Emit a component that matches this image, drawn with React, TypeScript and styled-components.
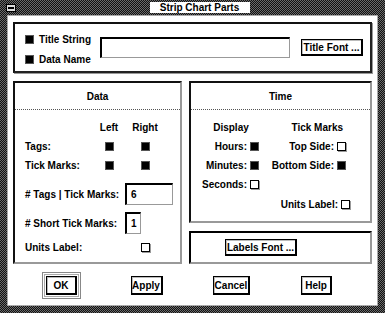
import React from "react";
import styled, { createGlobalStyle, css } from "styled-components";

const GlobalStyle = createGlobalStyle`
  html, body { margin: 0; padding: 0; background: #fff; }
  body { font-family: "Liberation Sans", Arial, sans-serif; }
`;

const dither = css`
  background-color: #333;
  background-image: repeating-conic-gradient(#111 0% 25%, #6a6a6a 0% 50%);
  background-size: 2px 2px;
`;

const Window = styled.div`
  ${dither};
  width: 385px;
  height: 313px;
  box-sizing: border-box;
  padding: 0 7px 7px 7px;
  display: flex;
  flex-direction: column;
`;

const TitleBar = styled.div`
  height: 15px;
  display: flex;
  align-items: center;
  margin: 0 -1px;
`;

const MenuButton = styled.div`
  width: 10px;
  height: 8px;
  box-sizing: border-box;
  background: #ddd;
  border: 1px solid #000;
  display: flex;
  align-items: center;
  justify-content: center;
  &::after {
    content: "";
    width: 6px;
    height: 2px;
    background: #000;
  }
`;

const TitleArea = styled.div`
  flex: 1;
  display: flex;
  justify-content: center;
`;

const TitleLabel = styled.div`
  background: #fff;
  width: 100px;
  height: 11px;
  line-height: 11px;
  text-align: center;
  font-size: 10px;
  font-weight: bold;
  color: #000;
  margin-left: 4px;
`;

const Body = styled.div`
  flex: 1;
  background: #fff;
  box-shadow: inset 0 0 0 1px #aaa;
  padding: 7px 6px 0 6px;
  display: flex;
  flex-direction: column;
  font-size: 10px;
  font-weight: bold;
  color: #000;
`;

const Panel = styled.div`
  box-sizing: border-box;
  border-top: 2px solid #111;
  border-left: 2px solid #111;
  border-right: 2px solid #999;
  border-bottom: 2px solid #999;
`;

const TopPanel = styled(Panel)`
  height: 51px;
  display: flex;
  align-items: center;
  padding-left: 10px;
  border-right-color: #222;
  border-bottom-color: #222;
  box-shadow: 1px 1px 0 #999;
`;

const CheckColumn = styled.div`
  display: flex;
  flex-direction: column;
  gap: 9px;
  width: 75px;
  padding-top: 3px;
`;

const CheckRow = styled.div`
  display: flex;
  align-items: center;
  gap: 5px;
  height: 11px;
`;

const Box = styled.div<{ $on?: boolean }>`
  width: 9px;
  height: 9px;
  box-sizing: border-box;
  flex: none;
  border: 1px solid ${(p) => (p.$on ? "#555" : "#000")};
  background: ${(p) => (p.$on ? "#000" : "#fff")};
  box-shadow: ${(p) => (p.$on ? "none" : "1px 1px 0 #999")};
`;

const TextField = styled.div<{ $w: number }>`
  box-sizing: border-box;
  width: ${(p) => p.$w}px;
  height: 22px;
  border-top: 2px solid #000;
  border-left: 2px solid #000;
  border-right: 1px solid #999;
  border-bottom: 1px solid #999;
  padding-left: 4px;
  display: flex;
  align-items: center;
  font-size: 10px;
  font-weight: bold;
`;

const WideField = styled(TextField)`
  height: 21px;
`;

const PushButton = styled.div<{ $w: number }>`
  box-sizing: border-box;
  width: ${(p) => p.$w}px;
  height: 17px;
  border: 1px solid #000;
  border-right-width: 2px;
  border-bottom-width: 2px;
  box-shadow: inset 1px 1px 0 #bbb;
  display: flex;
  align-items: center;
  justify-content: center;
  font-size: 10px;
  font-weight: bold;
  white-space: nowrap;
  background: #fff;
`;

const TitleFontButton = styled(PushButton)`
  margin-left: 11px;
`;

const Columns = styled.div`
  margin-top: 8px;
  display: grid;
  grid-template-columns: 169px 183px;
  column-gap: 7px;
  align-items: start;
`;

const DataPanel = styled(Panel)`
  height: 183px;
`;

const RightColumn = styled.div`
  display: flex;
  flex-direction: column;
  gap: 8px;
`;

const TimePanel = styled(Panel)`
  height: 142px;
`;

const PanelHeader = styled.div`
  height: 27px;
  box-sizing: border-box;
  border-bottom: 1px dotted #555;
  display: flex;
  align-items: center;
  justify-content: center;
  padding-top: 1px;
`;

const DataBody = styled.div`
  padding: 8px 0 0 10px;
  display: flex;
  flex-direction: column;
`;

const CheckGrid = styled.div`
  display: grid;
  grid-template-columns: 66px 36px 36px;
  grid-auto-rows: 19px;
  align-items: center;
  justify-items: center;
  & > :nth-child(3n + 1) {
    justify-self: start;
  }
`;

const InputRow = styled.div<{ $top: number }>`
  display: grid;
  grid-template-columns: 100px auto;
  align-items: center;
  margin-top: ${(p) => p.$top}px;
`;

const UnitsRow = styled.div`
  display: grid;
  grid-template-columns: 66px 36px 36px;
  align-items: center;
  justify-items: center;
  margin-top: 8px;
  height: 11px;
  & > :first-child {
    justify-self: start;
  }
`;

const TimeBody = styled.div`
  padding: 8px 0 0 6px;
  display: grid;
  grid-template-columns: 53px 13px 74px 13px;
  grid-auto-rows: 19px;
  align-items: center;
`;

const RightLabel = styled.div`
  justify-self: end;
  padding-right: 3px;
`;

const DisplayHead = styled.div`
  grid-column: 1 / 3;
  justify-self: center;
  margin-left: 2px;
`;

const TickHead = styled.div`
  grid-column: 3 / 5;
  justify-self: end;
  margin-right: 7px;
`;

const UnitsTimeRow = styled.div`
  grid-column: 3 / 5;
  display: flex;
  justify-content: flex-end;
  align-items: center;
  gap: 3px;
  margin-top: 1px;
`;

const Spacer = styled.div``;

const LabelsPanel = styled(Panel)`
  height: 33px;
  display: flex;
  align-items: center;
  padding-left: 34px;
  border-left-color: #000;
  border-top-color: #000;
`;

const ButtonRow = styled.div`
  margin-top: 8px;
  padding-left: 6px;
  display: grid;
  grid-template-columns: repeat(4, 85px);
  justify-items: center;
  align-items: center;
  height: 25px;
`;

const DefaultRing = styled.div`
  box-sizing: border-box;
  padding: 3px;
  border: 1px solid #888;
  box-shadow: inset 0 0 0 1px #fff, inset 0 0 0 2px #aaa;
`;

const DialogButton = styled(PushButton)`
  height: 19px;
`;

export default function App() {
  return (
    <>
      <GlobalStyle />
      <Window>
        <TitleBar>
          <MenuButton />
          <TitleArea>
            <TitleLabel>Strip Chart Parts</TitleLabel>
          </TitleArea>
        </TitleBar>
        <Body>
          <TopPanel>
            <CheckColumn>
              <CheckRow>
                <Box $on />
                <span>Title String</span>
              </CheckRow>
              <CheckRow>
                <Box $on />
                <span>Data Name</span>
              </CheckRow>
            </CheckColumn>
            <WideField $w={190} />
            <TitleFontButton $w={62}>Title Font ...</TitleFontButton>
          </TopPanel>

          <Columns>
            <DataPanel>
              <PanelHeader>Data</PanelHeader>
              <DataBody>
                <CheckGrid>
                  <Spacer />
                  <span>Left</span>
                  <span>Right</span>
                  <span>Tags:</span>
                  <Box $on />
                  <Box $on />
                  <span>Tick Marks:</span>
                  <Box $on />
                  <Box $on />
                </CheckGrid>
                <InputRow $top={8}>
                  <span># Tags | Tick Marks:</span>
                  <TextField $w={48}>6</TextField>
                </InputRow>
                <InputRow $top={7}>
                  <span># Short Tick Marks:</span>
                  <TextField $w={16}>1</TextField>
                </InputRow>
                <UnitsRow>
                  <span>Units Label:</span>
                  <Spacer />
                  <Box />
                </UnitsRow>
              </DataBody>
            </DataPanel>

            <RightColumn>
              <TimePanel>
                <PanelHeader>Time</PanelHeader>
                <TimeBody>
                  <DisplayHead>Display</DisplayHead>
                  <TickHead>Tick Marks</TickHead>
                  <RightLabel>Hours:</RightLabel>
                  <Box $on />
                  <RightLabel>Top Side:</RightLabel>
                  <Box />
                  <RightLabel>Minutes:</RightLabel>
                  <Box $on />
                  <RightLabel>Bottom Side:</RightLabel>
                  <Box $on />
                  <RightLabel>Seconds:</RightLabel>
                  <Box />
                  <Spacer />
                  <Spacer />
                  <UnitsTimeRow>
                    <span>Units Label:</span>
                    <Box />
                  </UnitsTimeRow>
                </TimeBody>
              </TimePanel>
              <LabelsPanel>
                <PushButton $w={72}>Labels Font ...</PushButton>
              </LabelsPanel>
            </RightColumn>
          </Columns>

          <ButtonRow>
            <DefaultRing>
              <DialogButton $w={31}>OK</DialogButton>
            </DefaultRing>
            <DialogButton $w={32}>Apply</DialogButton>
            <DialogButton $w={37}>Cancel</DialogButton>
            <DialogButton $w={31}>Help</DialogButton>
          </ButtonRow>
        </Body>
      </Window>
    </>
  );
}
